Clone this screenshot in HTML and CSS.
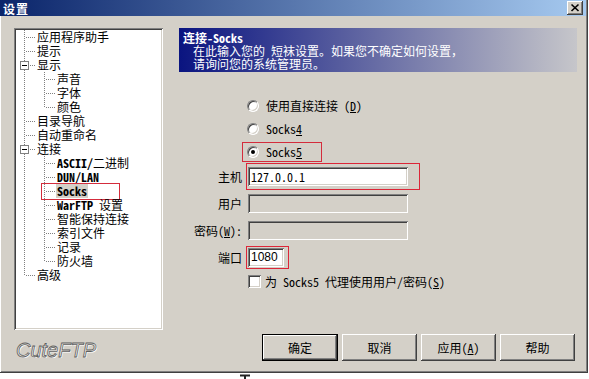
FILE: index.html
```html
<!DOCTYPE html>
<html lang="zh-CN">
<head>
<meta charset="utf-8">
<title>设置</title>
<link rel="stylesheet" href="styles.css">
</head>
<body>
<div class="window">
  <div class="titlebar">
    <span class="title">设置</span>
    <span class="close"><svg width="16" height="14" viewBox="0 0 16 14"><path d="M4.5 3.5l7 6.5M11.5 3.5l-7 6.5" stroke="#000" stroke-width="1.6" fill="none"/></svg></span>
  </div>
  <div class="body">
    <div class="left">
      <div class="tree">
        <div class="row"><i class="c t"></i><span class="tx">应用程序助手</span></div>
        <div class="row"><i class="c t"></i><span class="tx">提示</span></div>
        <div class="row"><i class="c t"><b class="minus"></b></i><span class="tx">显示</span></div>
        <div class="row"><i class="c v"></i><i class="c t"></i><span class="tx">声音</span></div>
        <div class="row"><i class="c v"></i><i class="c t"></i><span class="tx">字体</span></div>
        <div class="row"><i class="c v"></i><i class="c l"></i><span class="tx">颜色</span></div>
        <div class="row"><i class="c t"></i><span class="tx">目录导航</span></div>
        <div class="row"><i class="c t"></i><span class="tx">自动重命名</span></div>
        <div class="row"><i class="c t"><b class="minus"></b></i><span class="tx">连接</span></div>
        <div class="row"><i class="c v"></i><i class="c t"></i><span class="tx"><span class="en">ASCII/</span>二进制</span></div>
        <div class="row"><i class="c v"></i><i class="c t"></i><span class="tx en">DUN/LAN</span></div>
        <div class="row marked"><i class="c v"></i><i class="c t"></i><span class="tx sel en">Socks</span></div>
        <div class="row"><i class="c v"></i><i class="c t"></i><span class="tx"><span class="en">WarFTP</span> 设置</span></div>
        <div class="row"><i class="c v"></i><i class="c t"></i><span class="tx">智能保持连接</span></div>
        <div class="row"><i class="c v"></i><i class="c t"></i><span class="tx">索引文件</span></div>
        <div class="row"><i class="c v"></i><i class="c t"></i><span class="tx">记录</span></div>
        <div class="row"><i class="c v"></i><i class="c l"></i><span class="tx">防火墙</span></div>
        <div class="row"><i class="c l"></i><span class="tx">高级</span></div>
      </div>
      <div class="logo">CuteFTP</div>
    </div>
    <div class="right">
      <div class="banner">
        <div class="bt">连接-Socks</div>
        <div class="bd">在此输入您的 短袜设置。如果您不确定如何设置，</div>
        <div class="bd">请询问您的系统管理员。</div>
      </div>
      <div class="radios">
        <div class="radio-row"><span class="radio"></span><span>使用直接连接 (<u>D</u>)</span></div>
        <div class="radio-row"><span class="radio"></span><span>Socks<u>4</u></span></div>
        <div class="radio-row mark-s5"><span class="radio on"><b class="dot"></b></span><span>Socks<u>5</u></span></div>
      </div>
      <div class="form-row"><span class="lbl">主机</span><div class="field mark-host">127.0.0.1</div></div>
      <div class="form-row"><span class="lbl">用户</span><div class="field off"></div></div>
      <div class="form-row"><span class="lbl">密码(<u>W</u>):</span><div class="field off"></div></div>
      <div class="form-row"><span class="lbl">端口</span><div class="field port mark-port">1080</div></div>
      <div class="check-row"><span class="check"></span><span>为 Socks5 代理使用用户/密码(<u>S</u>)</span></div>
      <div class="buttons">
        <div class="btn default">确定</div>
        <div class="btn">取消</div>
        <div class="btn">应用(<u>A</u>)</div>
        <div class="btn">帮助</div>
      </div>
    </div>
  </div>
</div>
<div class="below"><svg class="tick" width="10" height="6" viewBox="0 0 10 6"><path d="M0 1.5h10M5 1.5v5" stroke="#222" stroke-width="2"/></svg></div>
</body>
</html>
```

FILE: styles.css
```css
*, *::before, *::after { box-sizing: border-box; margin: 0; padding: 0; }
html, body { background: #fff; }
body {
  width: 589px;
  height: 379px;
  overflow: hidden;
  font-family: "Noto Sans Mono CJK SC", "Noto Sans CJK SC", sans-serif;
  font-size: 12px;
  line-height: 14px;
  color: #000;
}
u { text-decoration: underline; text-underline-offset: 1px; }

.window {
  width: 588px;
  height: 373px;
  background: #d4d0c8;
  display: flex;
  flex-direction: column;
  border-right: 1px solid #404040;
  border-bottom: 1px solid #404040;
  box-shadow: inset -1px -1px #808080;
}

.titlebar {
  height: 16px;
  margin-right: 1px;
  background: linear-gradient(to right, #0a246a, #a6caf0);
  display: flex;
  align-items: flex-start;
  justify-content: space-between;
  padding: 0 3px 0 3px;
  flex: none;
}
.title {
  color: #fff;
  font-family: "Noto Sans CJK SC", sans-serif;
  font-weight: bold;
  font-size: 12px;
  letter-spacing: 1px;
  line-height: 16px;
  padding-top: 1px;
  display: block;
}
.close {
  width: 16px;
  height: 14px;
  margin-top: 1px;
  display: flex;
  background: #d4d0c8;
  box-shadow: inset -1px -1px #404040, inset 1px 1px #fff, inset -2px -2px #808080;
}

.body {
  flex: 1;
  display: flex;
  gap: 16px;
  padding: 12px 0 0 14px;
  box-shadow: inset 1px 0 #fff;
}

.left { width: 149px; flex: none; display: flex; flex-direction: column; }
.tree {
  height: 302px;
  background: #fff;
  padding: 2px;
  box-shadow: inset 1px 1px #808080, inset -1px -1px #fff, inset 2px 2px #404040, inset -2px -2px #d4d0c8;
}
.row {
  height: 14px;
  display: flex;
  align-items: center;
  position: relative;
  white-space: nowrap;
}
.c {
  width: 20px;
  height: 14px;
  flex: none;
  display: flex;
  align-items: center;
  --dv: repeating-linear-gradient(to bottom, #808080 0 1px, transparent 1px 2px);
  --dh: repeating-linear-gradient(to right, #808080 0 1px, transparent 1px 2px);
}
.t { background: var(--dv) 8px 0 / 1px 14px no-repeat, var(--dh) 10px 7px / 10px 1px no-repeat; }
.l { background: var(--dv) 8px 0 / 1px 8px no-repeat, var(--dh) 10px 7px / 10px 1px no-repeat; }
.v { background: var(--dv) 8px 0 / 1px 14px no-repeat; }
.minus {
  width: 9px;
  height: 9px;
  margin-left: 4px;
  border: 1px solid #808080;
  background: #fff linear-gradient(#000, #000) center / 5px 1px no-repeat;
}
.tx { margin-left: 1px; }
.en { font-weight: bold; }
.sel { background: #d4d0c8; margin-left: 0; padding: 0 1px; }
.marked::after {
  content: "";
  position: absolute;
  left: 25px;
  top: -1px;
  width: 79px;
  height: 17px;
  border: 1px solid #d42c3c;
}

.logo {
  margin-top: 10px;
  margin-left: 2px;
  font-family: "Liberation Sans", sans-serif;
  font-style: italic;
  font-size: 20px;
  line-height: 20px;
  color: #eeece6;
  -webkit-text-stroke: 0.8px #5e5e5e;
  text-shadow: 1px 1px 0 #fff;
}

.right { width: 398px; flex: none; display: flex; flex-direction: column; }
.banner {
  height: 44px;
  background: linear-gradient(to right, #0a1480, #c6c6ca);
  color: #fff;
  padding: 3px 0 0 4px;
  line-height: 13px;
  flex: none;
}
.bt { font-weight: bold; }
.bd { padding-left: 10px; }

.radios { margin-top: 26px; display: flex; flex-direction: column; gap: 7px; }
.radio-row {
  height: 16px;
  margin-left: 68px;
  display: flex;
  align-items: center;
  gap: 7px;
  position: relative;
}
.radio {
  width: 12px;
  height: 12px;
  border-radius: 50%;
  background: #fff;
  border: 1px solid;
  border-color: #808080 #fff #fff #808080;
  box-shadow: inset 1px 1px #404040, inset -1px -1px #d4d0c8;
  display: flex;
  align-items: center;
  justify-content: center;
  flex: none;
}
.dot { width: 4px; height: 4px; border-radius: 50%; background: #000; }
.mark-s5::after {
  content: "";
  position: absolute;
  left: -5px;
  top: -2px;
  width: 80px;
  height: 20px;
  border: 1px solid #d42c3c;
}

.form-row { display: flex; align-items: center; height: 19px; margin-top: 8px; }
.radios + .form-row { margin-top: 7px; }
.lbl { width: 64px; flex: none; text-align: right; padding-right: 1px; white-space: nowrap; }
.field {
  margin-left: 5px;
  width: 160px;
  height: 19px;
  background: #fff;
  box-shadow: inset 1px 1px #808080, inset -1px -1px #fff, inset 2px 2px #404040, inset -2px -2px #d4d0c8;
  padding: 2px 3px 0 3px;
  line-height: 15px;
  position: relative;
}
.field.off { background: #d4d0c8; }
.field.port { width: 36px; font-family: "Liberation Sans", sans-serif; font-size: 12px; }
.mark-host::after {
  content: "";
  position: absolute;
  left: -2px;
  top: -4px;
  width: 174px;
  height: 27px;
  border: 1px solid #dc2638;
}
.mark-port::after {
  content: "";
  position: absolute;
  left: -2px;
  top: -2px;
  width: 43px;
  height: 23px;
  border: 1px solid #dc2638;
}

.check-row {
  margin-top: 8px;
  margin-left: 69px;
  height: 13px;
  display: flex;
  align-items: center;
  gap: 4px;
  white-space: nowrap;
}
.check {
  width: 13px;
  height: 13px;
  flex: none;
  background: #fff;
  box-shadow: inset 1px 1px #808080, inset -1px -1px #fff, inset 2px 2px #404040, inset -2px -2px #d4d0c8;
}

.buttons {
  margin-top: 46px;
  margin-right: 2px;
  display: flex;
  justify-content: flex-end;
  gap: 4px;
}
.btn {
  width: 75px;
  height: 27px;
  display: flex;
  align-items: center;
  justify-content: center;
  background: #d4d0c8;
  box-shadow: inset -1px -1px #404040, inset 1px 1px #fff, inset -2px -2px #808080;
}
.btn.default {
  width: 76px;
  border: 1px solid #000;
}

.below { height: 6px; padding-left: 240px; }
.tick { display: block; margin-top: 1px; }
```
